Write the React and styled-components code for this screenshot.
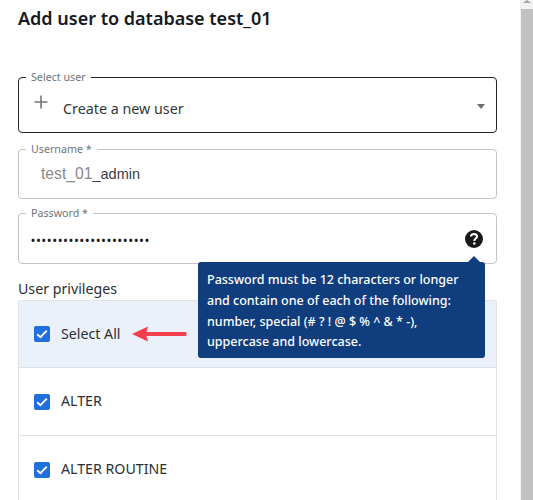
import React from "react";
import styled, { createGlobalStyle } from "styled-components";

const Global = createGlobalStyle`
  html, body { margin: 0; padding: 0; height: 500px; overflow: hidden; background: #fff; }
  #root { height: 500px; }
  * { box-sizing: border-box; }
`;

const Page = styled.div`
  display: flex;
  height: 500px;
  width: 533px;
  font-family: "Noto Sans", sans-serif;
  color: #1f2329;
`;
const Panel = styled.main`
  position: relative;
  width: 520px;
  height: 500px;
  overflow: hidden;
  padding: 6px 23px 0 18px;
`;
const Title = styled.h1`
  margin: 0 0 41px;
  font-size: 18px;
  line-height: 24px;
  font-weight: 600;
  color: #16191d;
`;
const Field = styled.fieldset`
  margin: 0 0 ${p => p.$gap}px;
  padding: 0 10px 0 22px;
  height: ${p => p.$h}px;
  border: ${p => (p.$active ? "1.5px solid #22262b" : "1px solid #c4c4c4")};
  border-radius: 4px;
  display: flex;
  align-items: center;
  min-width: 0;
`;
const Legend = styled.legend`
  margin-left: -15px;
  padding: 0 5px;
  font-size: 10.7px;
  line-height: 12px;
  color: #6f7479;
`;
const Row = styled.div`
  display: flex;
  align-items: center;
  width: 100%;
  height: 100%;
  margin-top: -6px;
`;
const SelectRow = styled(Row)`
  margin-top: -5px;
  margin-left: -7px;
`;
const PlusIcon = styled.svg`
  width: 14px;
  height: 14px;
  margin: -6px 15px 0 0;
  flex: none;
`;
const SelectText = styled.span`
  font-size: 14.3px;
  color: #33373c;
  flex: 1;
  padding-top: 6px;
`;
const Caret = styled.span`
  width: 0;
  height: 0;
  border-left: 4.5px solid transparent;
  border-right: 4.5px solid transparent;
  border-top: 5px solid #6e6e6e;
  margin-right: -6px;
  margin-top: 2px;
`;
const Prefix = styled.span`
  font-family: "Liberation Sans", Arial, sans-serif;
  font-size: 15.7px;
  color: #8a8a8a;
`;
const UserValue = styled.span`
  font-family: "Liberation Sans", Arial, sans-serif;
  font-size: 14.5px;
  color: #3a3d41;
`;
const Dots = styled.span`
  flex: 1;
  margin-left: -10px;
  padding-top: 4px;
  font-size: 10.5px;
  font-weight: 700;
  letter-spacing: 1.48px;
  color: #16191d;
`;
const HelpIcon = styled.svg`
  width: 20px;
  height: 20px;
  flex: none;
  margin: 2px 2px 0 0;
`;
const SectionLabel = styled.div`
  font-size: 14.2px;
  line-height: 20px;
  color: #2b2f34;
  margin: 15px 0 1px;
`;
const List = styled.div`
  border: 1px solid #dfe1e4;
  border-bottom: none;
  border-radius: 3px 3px 0 0;
`;
const Item = styled.div`
  display: flex;
  align-items: center;
  height: ${p => p.$h}px;
  padding: 0 0 0 15px;
  gap: 11px;
  font-size: 14.2px;
  color: #2b2f34;
  background: ${p => (p.$head ? "#eaf1fb" : "#fff")};
  border-bottom: 1px solid #dfe1e4;
`;
const ItemLabel = styled.span`
  margin-top: -2px;
`;
const Check = styled.span`
  width: 16px;
  height: 16px;
  flex: none;
  border-radius: 2px;
  background: #1f6fdc;
  display: flex;
  align-items: center;
  justify-content: center;
`;
const Arrow = styled.svg`
  width: 56px;
  height: 16px;
  margin-left: 1px;
  flex: none;
`;
const Tooltip = styled.div`
  position: absolute;
  left: 198px;
  top: 262px;
  width: 287px;
  height: 96px;
  padding: 8px 9px;
  background: #0f3d7d;
  color: #fff;
  border-radius: 3px;
  font-size: 12.5px;
  font-weight: 500;
  line-height: 20.8px;
  &::before {
    content: "";
    position: absolute;
    top: -6px;
    right: 5px;
    border-left: 6px solid transparent;
    border-right: 6px solid transparent;
    border-bottom: 6px solid #0f3d7d;
  }
`;
const Scrollbar = styled.div`
  width: 13px;
  height: 500px;
  flex: none;
  background: #f1f1f1;
  display: flex;
  flex-direction: column;
  align-items: flex-end;
`;
const ScrollUp = styled.div`
  height: 9px;
  width: 12px;
  display: flex;
  justify-content: center;
  &::before {
    content: "";
    height: 0;
    border-left: 4px solid transparent;
    border-right: 4px solid transparent;
    border-bottom: 3px solid #a3a3a3;
  }
`;
const Thumb = styled.div`
  width: 12px;
  flex: 1;
  background: #c1c1c1;
`;

const Tick = () => (
  <svg width="12" height="10" viewBox="0 0 12 10" fill="none">
    <path d="M1.2 5.2 L4.4 8.2 L10.8 1.6" stroke="#fff" strokeWidth="1.9" />
  </svg>
);

export default function App() {
  return (
    <>
      <Global />
      <Page>
        <Panel>
          <Title>Add user to database test_01</Title>
          <Field $active $h={62} $gap={10}>
            <Legend>Select user</Legend>
            <SelectRow>
              <PlusIcon viewBox="0 0 14 14">
                <path d="M7 0.5V13.5M0.5 7H13.5" stroke="#777" strokeWidth="1.6" fill="none" />
              </PlusIcon>
              <SelectText>Create a new user</SelectText>
              <Caret />
            </SelectRow>
          </Field>
          <Field $h={56} $gap={8}>
            <Legend>Username *</Legend>
            <Row>
              <Prefix>test_01</Prefix>
              <UserValue>_admin</UserValue>
            </Row>
          </Field>
          <Field $h={57} $gap={0}>
            <Legend>Password *</Legend>
            <Row>
              <Dots>••••••••••••••••••••••</Dots>
              <HelpIcon viewBox="0 0 20 20">
                <circle cx="10" cy="10" r="9" fill="#1a1a1a" />
                <path
                  d="M7 7.6C7 5.9 8.3 4.9 10 4.9C11.8 4.9 13 5.9 13 7.4C13 9.5 10.3 9.6 10.3 11.9"
                  stroke="#fff"
                  strokeWidth="2"
                  fill="none"
                />
                <circle cx="10.3" cy="14.6" r="1.25" fill="#fff" />
              </HelpIcon>
            </Row>
          </Field>
          <SectionLabel>User privileges</SectionLabel>
          <List>
            <Item $head $h={67}>
              <Check><Tick /></Check>
              <ItemLabel>Select All</ItemLabel>
              <Arrow viewBox="0 0 56 16">
                <path d="M0 8 L16 0.5 L14.5 6 L54 6 Q55.5 8 54 10 L14.5 10 L16 15.5 Z" fill="#f4404e" />
              </Arrow>
            </Item>
            <Item $h={68}>
              <Check><Tick /></Check>
              <ItemLabel>ALTER</ItemLabel>
            </Item>
            <Item $h={68}>
              <Check><Tick /></Check>
              <ItemLabel>ALTER ROUTINE</ItemLabel>
            </Item>
          </List>
          <Tooltip>
            Password must be 12 characters or longer
            <br />
            and contain one of each of the following:
            <br />
            number, special (# ? ! @ $ % ^ &amp; * -),
            <br />
            uppercase and lowercase.
          </Tooltip>
        </Panel>
        <Scrollbar>
          <ScrollUp />
          <Thumb />
        </Scrollbar>
      </Page>
    </>
  );
}
